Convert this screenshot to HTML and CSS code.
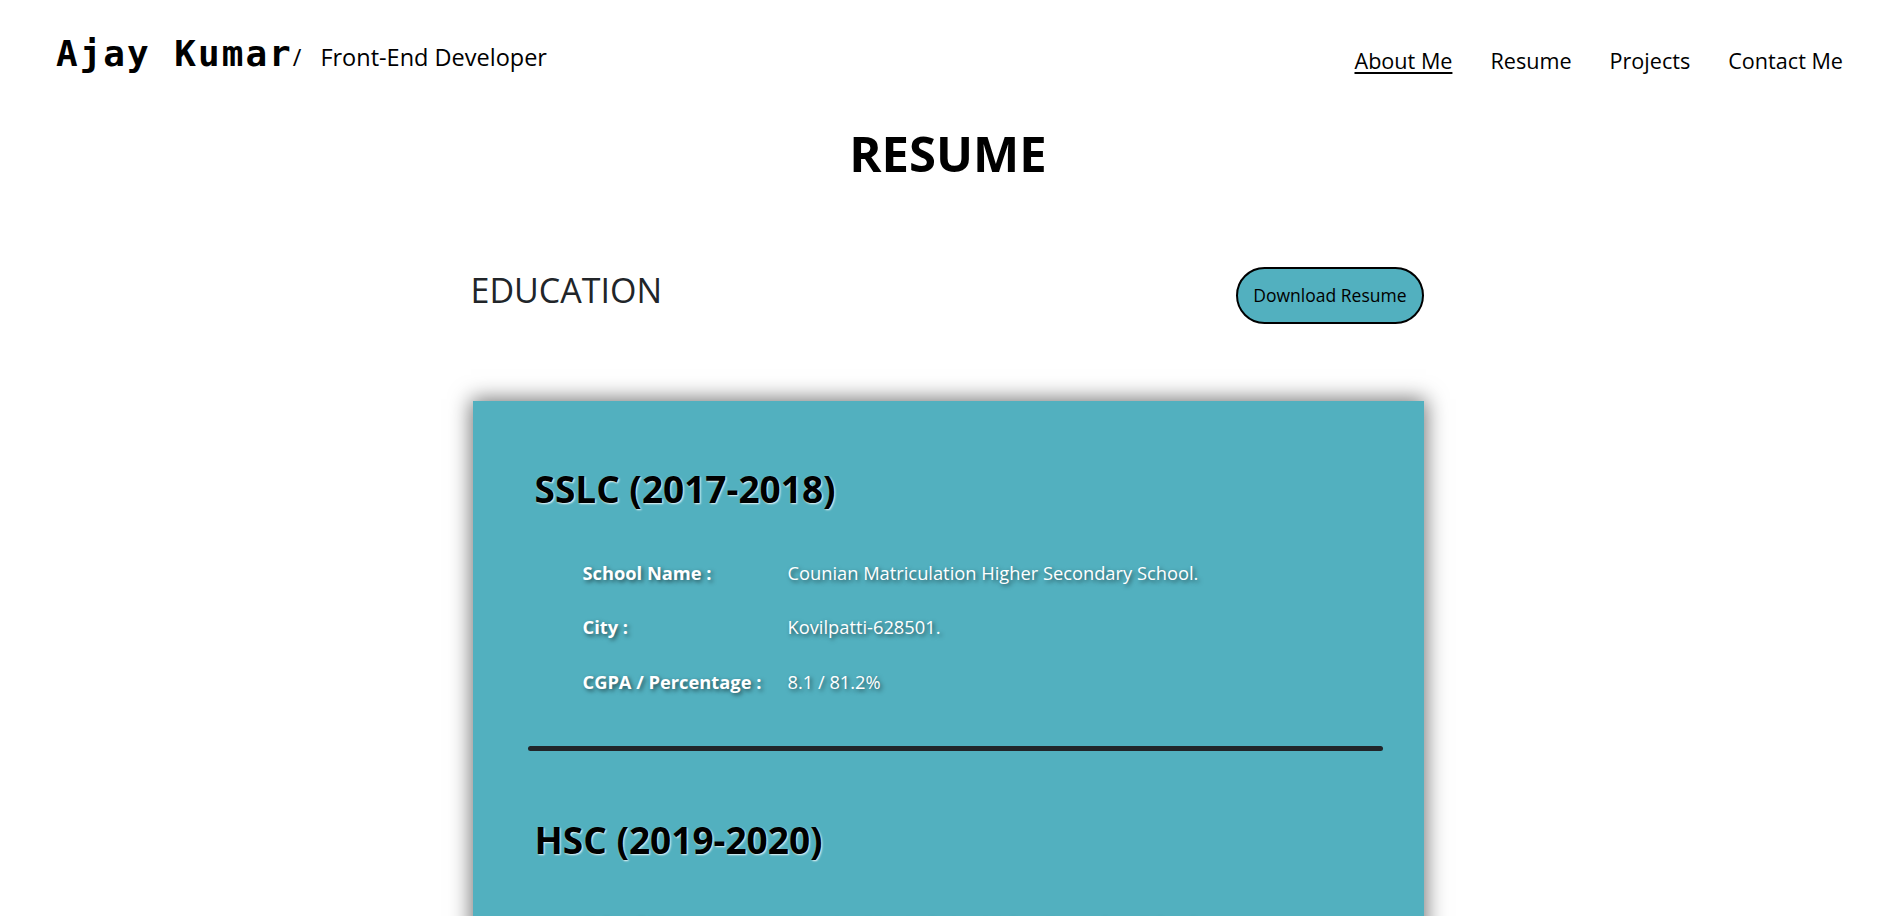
FILE: index.html
```html
<!DOCTYPE html>
<html lang="en">
<head>
<meta charset="utf-8">
<title>Ajay Kumar - Resume</title>
<link rel="stylesheet" href="styles.css">
</head>
<body>
<header class="site-header">
  <div class="brand-group">
    <span class="brand">Ajay Kumar</span>
    <span class="slash">/</span>
    <span class="tagline">Front-End Developer</span>
  </div>
  <nav class="nav">
    <a class="nav-link active" href="#about">About Me</a>
    <a class="nav-link" href="#resume">Resume</a>
    <a class="nav-link" href="#projects">Projects</a>
    <a class="nav-link" href="#contact">Contact Me</a>
  </nav>
</header>

<main class="page">
  <h1 class="page-title">RESUME</h1>

  <section class="resume">
    <div class="section-head">
      <h2 class="section-title">EDUCATION</h2>
      <button class="download-btn" type="button">Download Resume</button>
    </div>

    <div class="edu-card">
      <div class="edu-block">
        <h3 class="edu-title">SSLC (2017-2018)</h3>
        <div class="edu-rows">
          <div class="edu-label">School Name :</div>
          <div class="edu-value">Counian Matriculation Higher Secondary School.</div>
          <div class="edu-label">City :</div>
          <div class="edu-value">Kovilpatti-628501.</div>
          <div class="edu-label">CGPA / Percentage :</div>
          <div class="edu-value">8.1 / 81.2%</div>
        </div>
      </div>

      <div class="edu-divider"></div>

      <div class="edu-block">
        <h3 class="edu-title">HSC (2019-2020)</h3>
        <div class="edu-rows">
          <div class="edu-label">School Name :</div>
          <div class="edu-value">Counian Matriculation Higher Secondary School.</div>
          <div class="edu-label">City :</div>
          <div class="edu-value">Kovilpatti-628501.</div>
          <div class="edu-label">CGPA / Percentage :</div>
          <div class="edu-value">7.4 / 74.3%</div>
        </div>
      </div>
    </div>
  </section>
</main>
</body>
</html>
```

FILE: styles.css
```css
* {
  box-sizing: border-box;
}

body {
  margin: 0;
  background: #ffffff;
  color: #212529;
  font-family: "Open Sans", "Noto Sans", sans-serif;
}

/* ---------- header ---------- */
.site-header {
  display: flex;
  justify-content: space-between;
  align-items: flex-start;
  padding: 36px 53px 0 56px;
}

.brand-group {
  display: flex;
  align-items: baseline;
}

.brand {
  font-family: "DejaVu Sans Mono", "Liberation Mono", monospace;
  font-weight: bold;
  font-size: 36px;
  line-height: 1;
  letter-spacing: 2px;
  color: #000;
}

.slash {
  font-size: 23.5px;
  line-height: 1;
  color: #000;
}

.tagline {
  font-size: 23.5px;
  line-height: 1;
  margin-left: 19px;
  color: #000;
}

.nav {
  display: flex;
  gap: 38px;
  margin-top: 14px;
}

.nav-link {
  font-size: 21.6px;
  line-height: 1;
  color: #000;
  text-decoration: none;
}

.nav-link.active {
  text-decoration: underline;
  text-decoration-thickness: 2px;
  text-underline-offset: 3px;
}

/* ---------- page ---------- */
.page-title {
  margin: 57px 0 0;
  text-align: center;
  font-size: 49px;
  line-height: 1;
  font-weight: 700;
  color: #000;
}

.resume {
  width: 951px;
  margin: 89px auto 0;
}

.section-head {
  display: flex;
  justify-content: space-between;
  align-items: flex-start;
}

.section-title {
  margin: 6px 0 0 -2px;
  font-size: 34px;
  line-height: 1;
  font-weight: 400;
  color: #212529;
}

.download-btn {
  height: 57px;
  padding: 0 15px;
  border: 2px solid #000;
  border-radius: 30px;
  background: #52b0bf;
  color: #000;
  font-family: "Open Sans", "Noto Sans", sans-serif;
  font-size: 17.5px;
  line-height: 1;
}

/* ---------- card ---------- */
.edu-card {
  margin-top: 77px;
  background: #52b0bf;
  padding: 69px 41px 80px 55px;
  box-shadow: 0 0 20px 2px rgba(0, 0, 0, 0.55);
}

.edu-block {
  padding-left: 7px;
}

.edu-title {
  margin: 0;
  font-size: 37px;
  line-height: 1;
  font-weight: 700;
  color: #000;
  text-shadow: 1px 1px 2px rgba(255, 255, 255, 0.9);
}

.edu-rows {
  display: grid;
  grid-template-columns: 205px auto;
  row-gap: 36px;
  margin-top: 57px;
  padding-left: 48px;
}

.edu-label,
.edu-value {
  font-size: 18.3px;
  line-height: 1;
  color: #fff;
  text-shadow: 2px 2px 4px rgba(0, 0, 0, 0.55);
}

.edu-label {
  font-weight: 700;
}

.edu-divider {
  height: 5px;
  margin: 55px 0 70px;
  background: #212529;
  border-radius: 3px;
}
```
